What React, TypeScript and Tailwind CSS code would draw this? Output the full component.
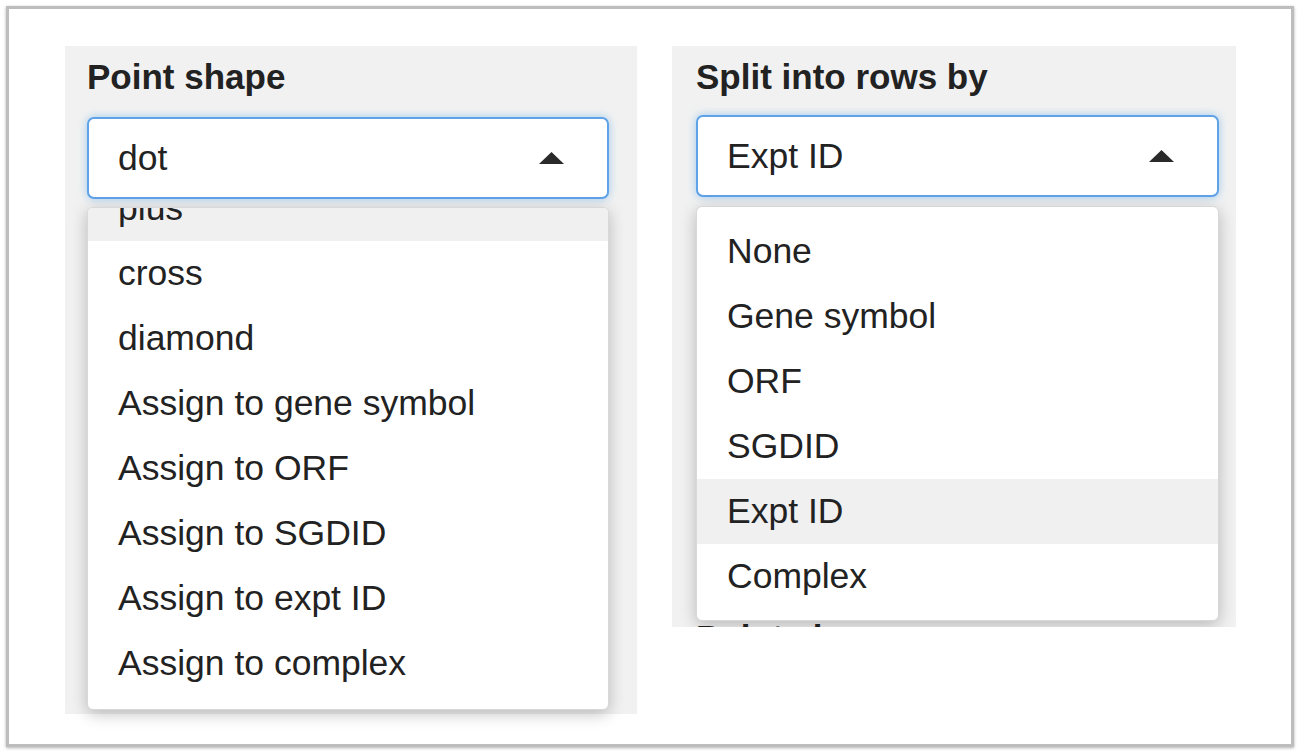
import React from "react";

const font = { fontFamily: '"Liberation Sans", Arial, Helvetica, sans-serif' };

const pointShapes = [
  "plus",
  "cross",
  "diamond",
  "Assign to gene symbol",
  "Assign to ORF",
  "Assign to SGDID",
  "Assign to expt ID",
  "Assign to complex",
];

const rowOptions = ["None", "Gene symbol", "ORF", "SGDID", "Expt ID", "Complex"];

function Caret() {
  return (
    <svg width="25" height="12" viewBox="0 0 25 12" className="shrink-0">
      <path d="M12.5 0 L25 12 L0 12 Z" fill="#2a2a2a" />
    </svg>
  );
}

function SelectBox({ value }: { value: string }) {
  return (
    <div className="flex h-[82px] w-full items-center justify-between rounded-[7px] border-2 border-[#5fa2e8] bg-white pl-[29px] pr-[43px] shadow-[0_0_8px_rgba(102,175,233,0.6)]">
      <span className="text-[35.5px] leading-[35px] text-[#222]">{value}</span>
      <Caret />
    </div>
  );
}

function Option({ label, active }: { label: string; active?: boolean }) {
  return (
    <div
      className={
        "h-[65px] pl-[30px] text-[35.5px] leading-[65px] text-[#222] whitespace-nowrap " +
        (active ? "bg-[#f0f0f0]" : "bg-white")
      }
    >
      {label}
    </div>
  );
}

export default function App() {
  return (
    <div style={font} className="h-[753px] w-[1299px] bg-white pl-[6px] pt-[6px]">
      <div className="h-[741px] w-[1288px] border-[3px] border-[#bdbdbd] bg-white pl-[56px] pt-[37px] shadow-[0_1px_3px_rgba(0,0,0,0.3)]">
        <div className="flex items-start gap-[35px]">
          {/* Point shape */}
          <div className="h-[668px] w-[572px] bg-[#f1f1f1] pl-[22px] pt-[13px]">
            <div className="text-[35px] font-bold leading-[35px] text-[#222]">Point shape</div>
            <div className="relative mt-[23px] w-[522px]">
              <SelectBox value="dot" />
              <div className="absolute left-0 top-full mt-[8px] h-[503px] w-[522px] overflow-hidden rounded-[6px] border border-[#d8d8d8] bg-white shadow-[0_4px_16px_rgba(0,0,0,0.24)]">
                <div className="-mt-[32px]">
                  {pointShapes.map((s, i) => (
                    <Option key={s} label={s} active={i === 0} />
                  ))}
                </div>
              </div>
            </div>
          </div>

          {/* Split into rows by */}
          <div className="relative h-[581px] w-[564px] overflow-hidden bg-[#f1f1f1] pl-[24px] pt-[13px]">
            <div className="text-[35px] font-bold leading-[35px] text-[#222]">Split into rows by</div>
            <div className="relative mt-[21px] w-[523px]">
              <SelectBox value="Expt ID" />
              <div className="absolute left-0 top-full z-10 mt-[9px] h-[415px] w-[523px] overflow-hidden rounded-[6px] border border-[#d8d8d8] bg-white pt-[12px] shadow-[0_4px_16px_rgba(0,0,0,0.24)]">
                {rowOptions.map((s) => (
                  <Option key={s} label={s} active={s === "Expt ID"} />
                ))}
              </div>
            </div>
            <div className="mt-[423px] text-[35px] font-bold leading-[35px] text-[#222]">Point shape</div>
          </div>
        </div>
      </div>
    </div>
  );
}
